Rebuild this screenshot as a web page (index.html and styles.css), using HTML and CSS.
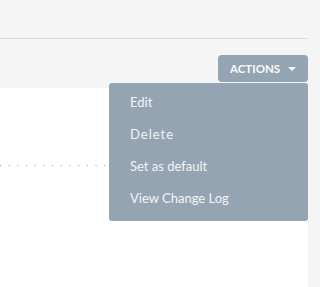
FILE: index.html
```html
<!DOCTYPE html>
<html>
<head>
<meta charset="utf-8">
<link rel="stylesheet" href="styles.css">
</head>
<body>
<div class="page">
  <div class="header"></div>
  <div class="toolbar">
    <div class="actions">
      <button class="actions-btn">ACTIONS<span class="caret"></span></button>
      <ul class="menu">
        <li class="item">Edit</li>
        <li class="item item-spaced">Delete</li>
        <li class="item">Set as default</li>
        <li class="item">View Change Log</li>
      </ul>
    </div>
  </div>
  <div class="panel">
    <div class="row"></div>
  </div>
</div>
</body>
</html>
```

FILE: styles.css
```css
html, body {
  margin: 0;
  padding: 0;
  height: 100%;
}
body {
  background: #f5f5f5;
  font-family: Lato, "Open Sans", sans-serif;
  overflow: hidden;
}
.page {
  width: 308px;
  height: 287px;
  display: flex;
  flex-direction: column;
}
.header {
  height: 38px;
  border-bottom: 1px solid #dcdcdc;
  flex: none;
}
.toolbar {
  height: 49px;
  flex: none;
  display: flex;
  justify-content: flex-end;
  align-items: flex-start;
  padding-top: 16px;
  box-sizing: border-box;
}
.actions {
  position: relative;
}
.actions-btn {
  display: flex;
  align-items: center;
  height: 27px;
  width: 90px;
  padding: 0 0 0 12px;
  box-sizing: border-box;
  border: none;
  border-radius: 4px;
  background: #94a4b2;
  color: #f9fafb;
  font-family: Lato, sans-serif;
  font-weight: bold;
  font-size: 11.5px;
  cursor: pointer;
}
.caret {
  display: inline-block;
  margin-left: 8px;
  margin-top: 1px;
  width: 0;
  height: 0;
  border-left: 4px solid transparent;
  border-right: 4px solid transparent;
  border-top: 4px solid #f9fafb;
}
.menu {
  position: absolute;
  top: calc(100% + 1px);
  right: 0;
  width: 199px;
  margin: 0;
  padding: 3px 0 7px 0;
  list-style: none;
  background: #94a4b2;
  border-radius: 3px;
  box-sizing: border-box;
  z-index: 2;
}
.item {
  height: 32px;
  line-height: 32px;
  padding-left: 21px;
  font-size: 13px;
  color: #f3f5f6;
}
.item-spaced {
  letter-spacing: 1px;
}
.panel {
  flex: 1;
  background: #ffffff;
  padding-top: 77px;
  box-sizing: border-box;
}
.row {
  height: 1px;
  background-image: linear-gradient(to right, #8f8f8f 0, #8f8f8f 1px, transparent 1px);
  background-size: 8.7px 1px;
  background-repeat: repeat-x;
}
```
